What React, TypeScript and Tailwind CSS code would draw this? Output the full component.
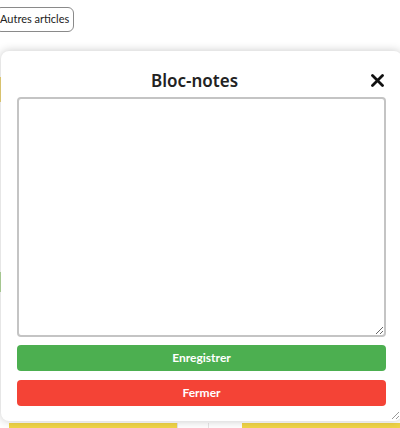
import { useState } from "react";

export default function App() {
  const [note, setNote] = useState("");
  const [open, setOpen] = useState(true);

  return (
    <div className="relative h-[428px] w-[400px] overflow-hidden bg-white" style={{ fontFamily: "Lato, 'Noto Sans', sans-serif" }}>
      {/* page behind */}
      <div className="flex h-full flex-col">
        <div className="pt-[5px]">
          <button className="-ml-[5px] h-[25px] rounded-md border border-[#8a8a8a] bg-white pl-[4px] pr-[4px] text-[11px] text-[#222]">
            Autres articles
          </button>
        </div>
        <div className="flex flex-1 flex-col">
          <div className="mt-[45px] h-[25px] w-[2px] bg-[#f0d77a]" />
          <div className="mt-[170px] h-[20px] w-[2px] bg-[#b7dca0]" />
        </div>
        <div className="flex h-[5px] items-stretch">
          <div className="ml-[9px] w-[168px] bg-[#f1d548]" />
          <div className="w-[32px] border-x border-[#e6e6e6]" />
          <div className="ml-[33px] flex-1 bg-[#f1d548]" />
        </div>
      </div>

      {open && (
        <div className="absolute left-[1px] top-[51px] flex h-[370px] w-[401px] flex-col rounded-lg bg-white px-4 pb-[14px] shadow-[0_0_10px_rgba(0,0,0,0.22)]">
          <div className="relative flex h-[46px] items-center justify-center pr-[14px] pt-[14px]">
            <h2 className="text-[17px] font-semibold text-[#222]" style={{ fontFamily: "'Noto Sans', sans-serif" }}>
              Bloc-notes
            </h2>
            <button onClick={() => setOpen(false)} className="absolute right-[2px] top-[23px] text-[#111]" aria-label="Fermer">
              <svg width="13" height="13" viewBox="0 0 13 13">
                <path d="M1.5 1.5 L11.5 11.5 M11.5 1.5 L1.5 11.5" stroke="currentColor" strokeWidth="2.8" strokeLinecap="round" />
              </svg>
            </button>
          </div>
          <textarea
            value={note}
            onChange={(e) => setNote(e.target.value)}
            className="h-[240px] w-full rounded-[4px] border-2 border-[#c4c4c4] bg-white p-2 text-sm outline-none"
          />
          <button className="mt-2 h-[26px] w-full rounded-[4px] bg-[#4caf50] text-[12px] font-bold text-white">
            Enregistrer
          </button>
          <button onClick={() => setOpen(false)} className="mt-[9px] h-[26px] w-full rounded-[4px] bg-[#f44336] text-[12px] font-bold text-white">
            Fermer
          </button>
          <div className="pointer-events-none absolute bottom-[1px] right-[2px]">
            <svg width="9" height="9" viewBox="0 0 9 9">
              <path d="M8 1 L1 8 M8 5 L5 8" stroke="#9a9a9a" strokeWidth="1" />
            </svg>
          </div>
        </div>
      )}
    </div>
  );
}
